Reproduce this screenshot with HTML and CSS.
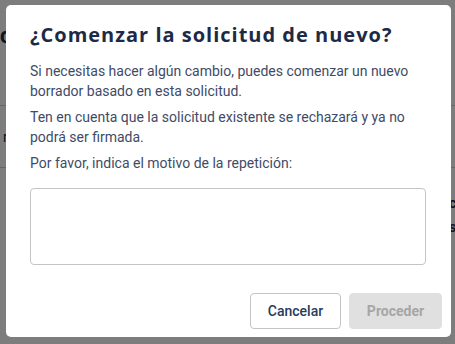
FILE: index.html
```html
<!DOCTYPE html>
<html lang="es">
<head>
<meta charset="utf-8">
<title>¿Comenzar la solicitud de nuevo?</title>
<link rel="stylesheet" href="styles.css">
</head>
<body>
<div class="page">
  <div class="page-head">
    <h1 class="page-title">de</h1>
  </div>
  <div class="page-row">
    <span class="row-label">r</span>
  </div>
  <div class="page-row page-row-right">
    <div class="row-stack">
      <span class="row-value">c</span>
      <span class="row-value">s</span>
    </div>
  </div>
</div>
<div class="backdrop"></div>
<div class="modal" role="dialog">
  <h2 class="modal-title">¿Comenzar la solicitud de nuevo?</h2>
  <div class="modal-body">
    <p>Si necesitas hacer algún cambio, puedes comenzar un nuevo borrador basado en esta solicitud.</p>
    <p>Ten en cuenta que la solicitud existente se rechazará y ya no podrá ser firmada.</p>
    <p>Por favor, indica el motivo de la repetición:</p>
    <textarea class="reason"></textarea>
  </div>
  <div class="modal-footer">
    <button class="btn btn-secondary">Cancelar</button>
    <button class="btn btn-primary" disabled>Proceder</button>
  </div>
</div>
</body>
</html>
```

FILE: styles.css
```css
* { box-sizing: border-box; }
html, body { margin: 0; padding: 0; }
body {
  width: 455px;
  height: 344px;
  overflow: hidden;
  background: #ffffff;
  font-family: Roboto, "Noto Sans", sans-serif;
  color: #1e2a45;
  position: relative;
}
.page-head {
  height: 106px;
  border-bottom: 1px solid #d0d0d0;
  padding: 22px 0 0 0;
}
.page-title {
  margin: 0;
  font-size: 22px;
  line-height: 28px;
  font-weight: 700;
  color: #1e2a45;
}
.page-row {
  height: 62px;
  border-bottom: 1px solid #d0d0d0;
  display: flex;
  align-items: center;
  font-size: 14px;
  color: #1e2a45;
  padding-left: 3px;
}
.page-row-right {
  border-bottom: none;
  height: 100px;
  justify-content: flex-end;
  align-items: flex-start;
  padding-top: 26px;
}
.row-stack {
  display: flex;
  flex-direction: column;
  gap: 6px;
  width: 6px;
  font-size: 14px;
  font-weight: 700;
  line-height: 18px;
}
.backdrop {
  position: absolute;
  inset: 0;
  background: rgba(0, 0, 0, 0.51);
}
.modal {
  position: absolute;
  left: 6px;
  top: 5px;
  width: 445px;
  height: 332px;
  background: #ffffff;
  border-radius: 5px;
  display: flex;
  flex-direction: column;
}
.modal-title {
  margin: 0;
  padding: 16px 20px 0 24px;
  font-family: "Open Sans", Roboto, sans-serif;
  font-size: 20px;
  line-height: 28px;
  font-weight: 700;
  letter-spacing: 1px;
  white-space: nowrap;
  color: #1e2a45;
}
.modal-body {
  padding: 12px 24px 0 24px;
  display: flex;
  flex-direction: column;
  gap: 6px;
}
.modal-body p {
  margin: 0;
  font-size: 14px;
  line-height: 20px;
  color: #3f4b66;
}
.reason {
  margin-top: 9px;
  width: 396px;
  height: 77px;
  border: 1px solid #c4c4c4;
  border-radius: 4px;
  resize: none;
  font-family: inherit;
}
.modal-footer {
  margin-top: auto;
  padding: 0 9px 8px 0;
  display: flex;
  justify-content: flex-end;
  gap: 8px;
}
.btn {
  height: 36px;
  border-radius: 4px;
  font-family: inherit;
  font-size: 14px;
  font-weight: 500;
  padding: 0 12px;
}
.btn-secondary {
  width: 91px;
  background: #ffffff;
  border: 1px solid #c4c4c4;
  color: #2a3a5c;
}
.btn-primary {
  width: 93px;
  background: #e0e0e0;
  border: 1px solid #e0e0e0;
  color: #a6a6a6;
  font-weight: 700;
}
```
